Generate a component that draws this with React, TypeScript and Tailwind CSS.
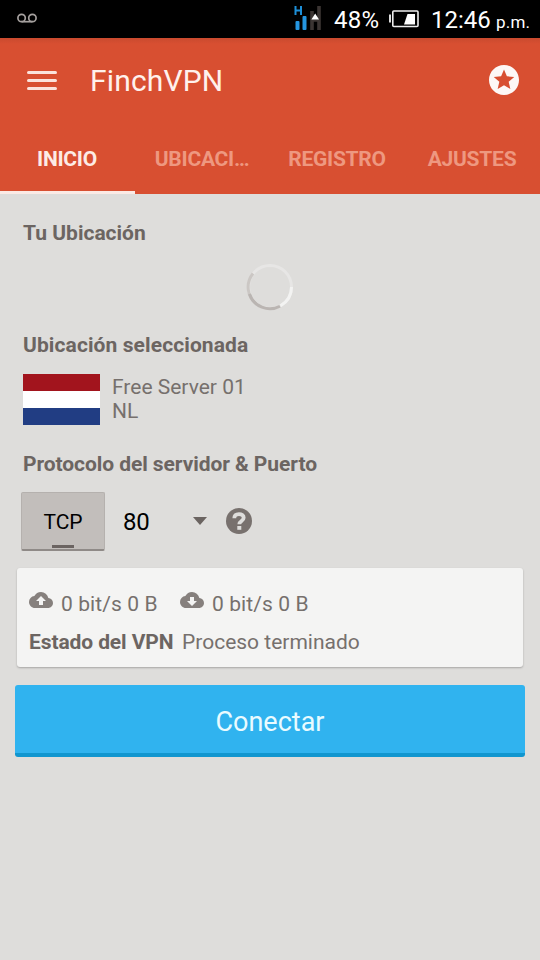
import React from 'react';
import { MdCloudDownload, MdCloudUpload, MdStars } from 'react-icons/md';

const tabs = [
  { label: 'INICIO', active: true },
  { label: 'UBICACI…', active: false },
  { label: 'REGISTRO', active: false },
  { label: 'AJUSTES', active: false }
];

const StatusBar: React.FC = () => {
  return (
    <div className="flex h-[38px] items-center bg-black text-white">
      <svg className="ml-4 h-5 w-6" viewBox="0 0 24 20" fill="none" stroke="#a5a09e" strokeWidth="1.7">
        <circle cx="5.6" cy="9" r="3.7" />
        <circle cx="16.4" cy="9" r="3.7" />
        <path d="M5.6 12.7h10.8" />
      </svg>
      <svg className="-mt-0.5 ml-[253px] h-[26px] w-[30px] shrink-0" viewBox="0 0 30 26">
        <path d="M2.500 1v9M8 1v9M2.500 5.500H8" stroke="#1d8fd8" strokeWidth="2" />
        <rect x="2.500" y="16" width="4" height="9" rx="1" fill="#2495e0" />
        <rect x="9.500" y="11" width="4" height="14" rx="1" fill="#2495e0" />
        <path d="M19 6v19M26 1v24M19 15h7" stroke="#3b3533" strokeWidth="3.600" />
        <path d="M22.200 8.500l3.800 6h-7.600z" fill="#fff" />
      </svg>
      <span className="ml-[11px] w-[46px] whitespace-nowrap pt-0.5 text-[24px] leading-[36px] tracking-[0.2px]">48%</span>
      <svg className="ml-2 h-[18px] w-[31px] shrink-0" viewBox="0 0 31 18" fill="none">
        <rect x="1" y="4.500" width="2" height="8" fill="#ddd" />
        <rect x="4.800" y="1" width="25.200" height="15.500" rx="1" stroke="#eee" strokeWidth="1.600" />
        <path d="M19.500 4H27v10.500H16z" fill="#fff" />
      </svg>
      <div className="ml-3 flex items-baseline whitespace-nowrap pt-[3px] leading-[36px]">
        <span className="w-[65px] text-[24px]">12:46</span>
        <span className="text-[17px] tracking-[0.2px]">p.m.</span>
      </div>
    </div>
  );
};

const Header: React.FC = () => {
  return (
    <header className="bg-[#d84f31] bg-linear-to-b from-[#c94a2e] to-[#d84f31] to-[6px]">
      <div className="flex h-[84px] items-center pl-[27px] pr-[18px]">
        <button type="button" className="flex w-[30px] flex-col gap-[5px]">
          <span className="h-[3px] rounded-sm bg-[#fbe3dc]" />
          <span className="h-[3px] rounded-sm bg-[#fbe3dc]" />
          <span className="h-[3px] rounded-sm bg-[#fbe3dc]" />
        </button>
        <h1 className="ml-[33px] flex-1 pt-0.5 text-[30px] tracking-[0.15px] text-[#fff1ec]">FinchVPN</h1>
        <MdStars className="h-9 w-9 text-[#fdf8f6]" />
      </div>
      <nav className="grid h-[72px] grid-cols-4">
        {tabs.map((tab) => (
          <button
            key={tab.label}
            type="button"
            className={`border-b-[3px] pr-px pt-[5px] text-[21px] font-bold tracking-[-0.25px] ${
              tab.active ? 'border-[#fbeae5] text-[#fdebe5]' : 'border-transparent text-[#ee9880]'
            }`}
          >
            {tab.label}
          </button>
        ))}
      </nav>
    </header>
  );
};

const HelpIcon: React.FC = () => {
  return (
    <svg className="-mt-0.5 ml-[19px] h-[26px] w-[26px]" viewBox="0 0 26 26" fill="none">
      <circle cx="13" cy="13" r="13" fill="#78716e" />
      <path d="M8.300 10.300C8.300 7.400 10.300 6.100 13 6.100s4.700 1.400 4.700 3.700c0 3.200-4.400 3.100-4.400 6.400" stroke="#dedddb" strokeWidth="3.800" />
      <rect x="11.300" y="18" width="4" height="3.800" fill="#dedddb" />
    </svg>
  );
};

const App: React.FC = () => {
  return (
    <div className="h-[960px] w-[540px] overflow-hidden bg-[#dedddb] font-['Roboto',sans-serif] text-[21px] leading-6 text-[#76706d]">
      <StatusBar />
      <Header />

      <main>
        <section className="px-[23px] pt-[27px] font-bold text-[#6c6562]">
          <h2>Tu Ubicación</h2>
          <div className="flex h-[88px] items-center justify-center pb-1">
            <svg className="h-[48px] w-[48px]" viewBox="0 0 48 48" fill="none" strokeWidth="3">
              <circle cx="24" cy="24" r="21.500" stroke="#e7e6e5" />
              <path d="M7 10.500A21.500 21.500 0 0 0 11 41.500" stroke="#cbc7c4" />
              <path d="M3.500 31A21.500 21.500 0 0 0 34 43.200" stroke="#bab5b2" />
              <path d="M34.500 42.700A21.500 21.500 0 0 0 45.500 24" stroke="#f3f3f2" />
            </svg>
          </div>
          <h2 className="tracking-[0.1px]">Ubicación seleccionada</h2>
        </section>

        <section className="flex gap-3 px-[23px] pt-[17px]">
          <div className="flex h-[51px] w-[77px] flex-col">
            <div className="flex-1 bg-[#a2141d]" />
            <div className="flex-1 bg-white" />
            <div className="flex-1 bg-[#213d83]" />
          </div>
          <div className="pt-px">
            <p>Free Server 01</p>
            <p>NL</p>
          </div>
        </section>

        <section className="px-[21px] pt-[27px]">
          <h2 className="ml-0.5 font-bold tracking-[-0.07px] text-[#6c6562]">Protocolo del servidor &amp; Puerto</h2>
          <div className="mt-4 flex h-[59px] items-center">
            <button
              type="button"
              className="flex h-[59px] w-[84px] flex-col items-center rounded-[2px] border border-b-2 border-[#b5b1ae] border-b-[#8f8a87] bg-[#c2bebb] pt-[17px] text-black"
            >
              TCP
              <span className="mt-[11px] h-[3px] w-[22px] bg-[#6b6461]" />
            </button>
            <button type="button" className="ml-[18px] flex w-[84px] items-center justify-between text-[24px] tracking-[-0.3px] text-black">
              80
              <svg className="mb-0.5 h-2 w-[14px]" viewBox="0 0 14 8" fill="#6b6461">
                <path d="M0 0h14L7 8z" />
              </svg>
            </button>
            <HelpIcon />
          </div>
        </section>

        <section className="mx-[17px] mt-[17px] h-[99px] rounded-[3px] bg-[#f4f4f3] px-3 pt-[20px] shadow-[0_1px_2px_rgba(0,0,0,0.25)]">
          <div className="flex">
            <div className="flex w-[151px] gap-2">
              <MdCloudUpload className="h-6 w-6 text-[#86807d]" />
              <span className="pt-[4px] tracking-[0.1px]">0 bit/s 0 B</span>
            </div>
            <div className="flex gap-2">
              <MdCloudDownload className="h-6 w-6 text-[#86807d]" />
              <span className="pt-[4px] tracking-[0.1px]">0 bit/s 0 B</span>
            </div>
          </div>
          <div className="flex pt-[14px]">
            <span className="w-[153px] font-bold tracking-[-0.1px] text-[#6c6562]">Estado del VPN</span>
            <span>Proceso terminado</span>
          </div>
        </section>

        <button
          type="button"
          className="mx-[15px] mt-[18px] h-[72px] w-[510px] rounded-[3px] border-b-4 border-[#1196cf] bg-[#30b3ef] pt-1.5 text-[27px] text-[#e9fbff]"
        >
          Conectar
        </button>
      </main>
    </div>
  );
};

export default App;
